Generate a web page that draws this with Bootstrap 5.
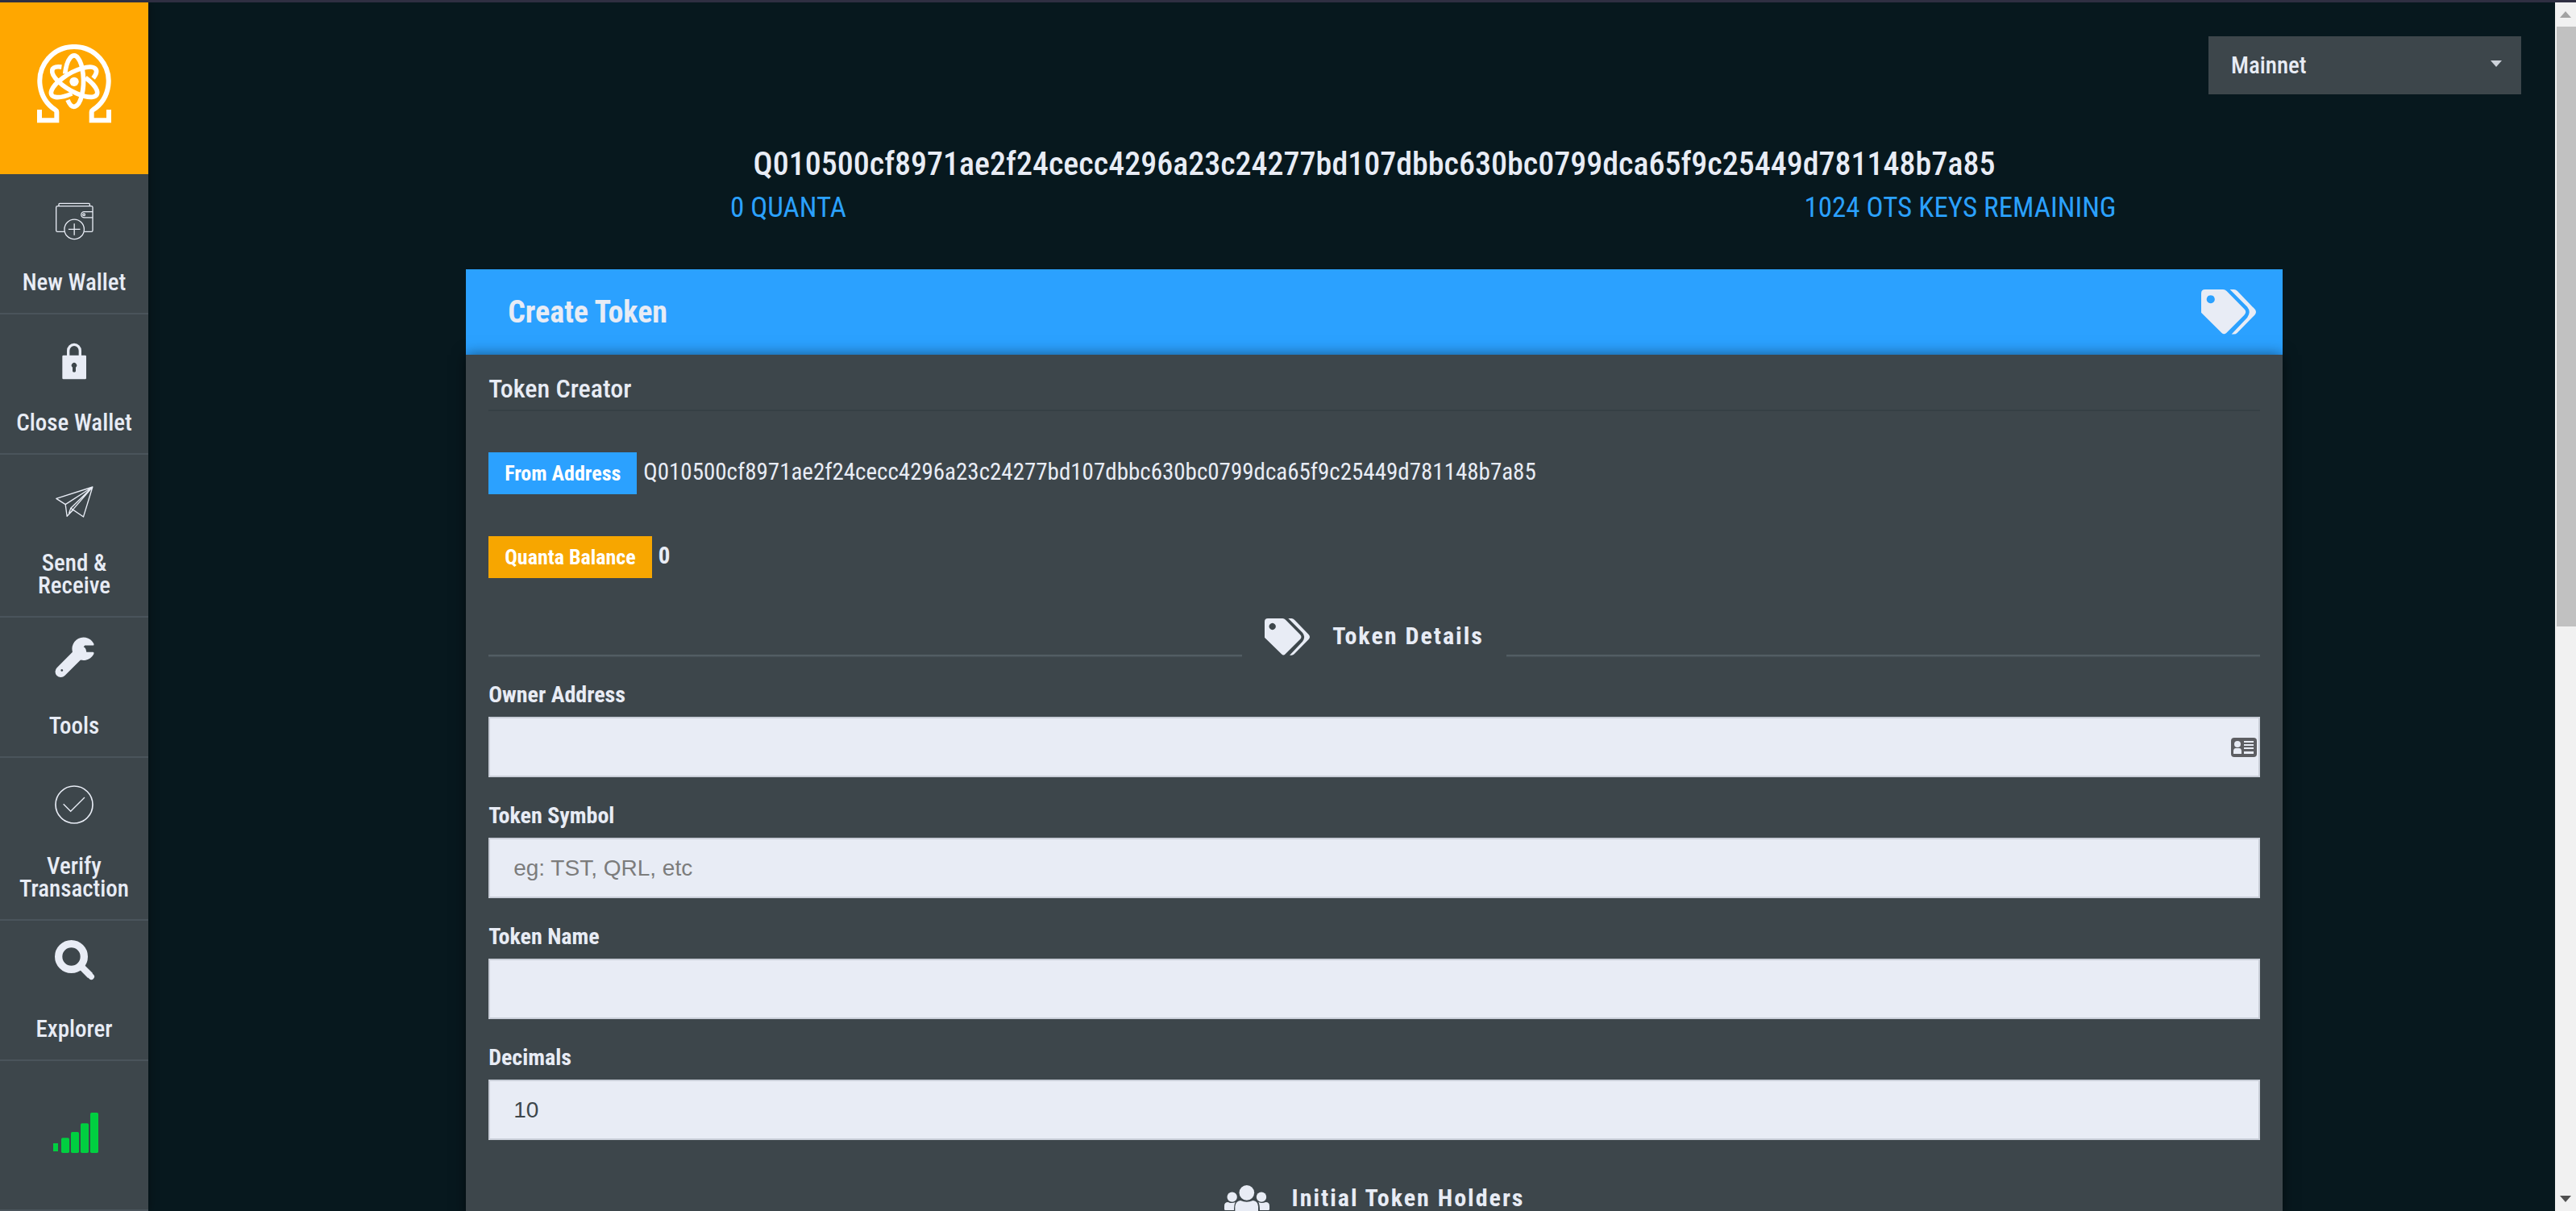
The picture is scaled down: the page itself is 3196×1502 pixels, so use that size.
<!DOCTYPE html>
<html lang="en">
<head>
<meta charset="utf-8">
<meta name="viewport" content="width=device-width, initial-scale=1">
<title>QRL Wallet - Create Token</title>
<link href="https://cdn.jsdelivr.net/npm/bootstrap@5.3.0/dist/css/bootstrap.min.css" rel="stylesheet">
<style>
  :root { --panel: #3d464b; --ink: #e8ecf5; --blue: #2ba1ff; --amber: #ffa700; --night: #07181e; }
  body { font-family: "Roboto Condensed", Roboto, sans-serif; font-size: 28px; line-height: 36px; color: var(--ink); background: var(--night); border-top: 3px solid #2f2f42; }
  .side-nav { width: 184px; background: var(--panel); box-shadow: 0 0 12px rgba(0,0,0,.4); }
  .brand-tile { height: 213px; padding-bottom: 11px; background: var(--amber); }
  .side-item { color: var(--ink); font-size: 29px; font-weight: 500; line-height: 28px; padding: 0 8px 24px; border-bottom: 2px solid #4a545b; text-align: center; text-decoration: none; }
  .side-icon { height: 120px; padding-bottom: 4px; }
  .side-icon.raised { padding-bottom: 22px; }
  .side-status { height: 186px; padding: 0 0 6px 4px; border-bottom: 2px solid #4a545b; }
  .workspace { padding: 42px 11px 0 67px; }
  .network-select { width: 388px; height: 72px; margin-right: 31px; padding: 2px 56px 0 28px; border: 0; border-radius: 0; color: var(--ink); background-color: var(--panel); font-size: 29px; font-weight: 500;
    background-image: url("data:image/svg+xml,%3Csvg xmlns='http://www.w3.org/2000/svg' viewBox='0 0 14 8'%3E%3Cpath fill='%23cdd2da' d='M0 0h14L7 8z'/%3E%3C/svg%3E"); background-size: 14px 8px; background-position: right 24px top 30px; }
  .wallet-address { font-size: 40px; line-height: 56px; font-weight: 500; margin-top: 59px; }
  .wallet-stats { font-size: 35px; line-height: 48px; color: var(--blue); margin-top: 2px; margin-bottom: 52px; }
  .token-panel { width: 77.5%; }
  .token-head { height: 106px; padding: 0 33px 0 52px; background: var(--blue); }
  .token-head h1 { font-size: 38px; line-height: 48px; font-weight: 700; }
  .token-body { padding: 22px 28px 0; background: var(--panel); box-shadow: 0 0 16px rgba(0,0,0,.5); }
  .creator-title { font-size: 32px; line-height: 40px; font-weight: 500; padding-bottom: 6px; margin-bottom: 51px; border-bottom: 2px solid #364045; }
  .detail-row { gap: 8px; margin-bottom: 52px; font-size: 29px; }
  .tag-btn { height: 52px; padding: 0 20px; border: 0; border-radius: 0; font-size: 26px; line-height: 48px; font-weight: 700; color: #fff; }
  .tag-blue { background: var(--blue); }
  .tag-amber { background: #f7a600; }
  .detail-value { line-height: 48px; padding-bottom: 4px; }
  .section-title { gap: 28px; margin-top: 50px; height: 48px; }
  .section-title h2 { font-size: 30px; line-height: 44px; font-weight: 700; letter-spacing: 2px; }
  .rule { height: 3px; background: linear-gradient(#5a656c, #434d53); }
  .field-list { gap: 30px; padding-top: 29px; }
  .field-list label { font-weight: 700; margin-bottom: 9px; }
  .field-list .form-control { height: 75px; padding: 0 29px; border: 2px solid #c9ced8; border-radius: 0; background: var(--ink); color: var(--panel); font: 28px "Liberation Sans", sans-serif; }
  .field-list .form-control::placeholder { color: #7c7c7c; }
  .contact-icon { right: 4px; top: 26px; }
  .scroll-rail { width: 26px; background: #f1f1f1; }
  .scroll-end { height: 30px; }
  .scroll-thumb { height: 49.6%; margin-left: 2px; background: #c1c1c1; }
</style>
<script src="https://cdn.jsdelivr.net/npm/bootstrap@5.3.0/dist/js/bootstrap.bundle.min.js"></script>
</head>
<body class="vh-100 d-flex overflow-hidden">
<svg class="d-none" aria-hidden="true">
  <symbol id="tags" viewBox="267 142 168 138">
    <path fill="#e8ecf5" fill-rule="evenodd" d="M279 142H334Q340 142 345 147L399 202Q408 211 399 220L344 275Q337 282 330 275L267 213V154Q267 142 279 142ZM296 159.500a12.500 12.500 0 1 0 .1 0Z"/>
    <path fill="#e8ecf5" d="M355 142H367Q373 142 378 147L431 202Q439 211 431 220L377 275Q373 279 367 279H360L408 228Q421 211 408 195Z"/>
  </symbol>
</svg>

<nav class="side-nav d-flex flex-column flex-shrink-0" aria-label="Wallet">
  <a href="#" class="brand-tile d-flex align-items-center justify-content-center flex-shrink-0" aria-label="Home">
    <svg width="92" height="98" viewBox="138 165 276 294" fill="none" stroke="#fff" stroke-width="18">
      <path d="M147 408V448H211V416Q211 412 206 409A128 128 0 1 1 346 409Q341 412 341 416V448H405V408"/>
      <g stroke-width="17">
        <path d="M252 372A35 95 0 1 0 242 275"/>
        <path d="M252 372A35 95 0 1 0 242 275" transform="rotate(120 276 304)"/>
        <path d="M252 372A35 95 0 1 0 242 275" transform="rotate(240 276 304)"/>
      </g>
      <circle cx="276" cy="304" r="17" fill="#fff" stroke="none"/>
    </svg>
  </a>
  <a href="#" class="side-item">
    <span class="side-icon d-flex align-items-center justify-content-center">
      <svg width="47" height="47" viewBox="206 752 142 140" fill="none" stroke="#e8ecf5" stroke-width="4">
        <path d="M239 861H213Q208 861 208 856V770Q208 765 213 765H340Q345 765 345 770V856Q345 861 340 861H313M218 765V758Q218 755 221 755H331Q334 755 334 758V765M345 786H313a11 11 0 0 0 0 22H345"/>
        <circle cx="312" cy="797" r="4"/><circle cx="276" cy="852" r="37"/><path d="M254 852H298M276 830V874"/>
      </svg>
    </span>New Wallet
  </a>
  <a href="#" class="side-item">
    <span class="side-icon d-flex align-items-center justify-content-center">
      <svg width="30" height="46" viewBox="231 136 90 138">
        <path d="M254 188V166A22 23 0 0 1 298 166V188" fill="none" stroke="#e8ecf5" stroke-width="10"/>
        <path fill="#e8ecf5" fill-rule="evenodd" d="M236 183H317Q321 183 321 187V268Q321 272 317 272H236Q232 272 232 268V187Q232 183 236 183ZM270 228V242Q270 246 276 246T282 242V228A9.500 9.500 0 1 0 270 228Z"/>
      </svg>
    </span>Close Wallet
  </a>
  <a href="#" class="side-item">
    <span class="side-icon d-flex align-items-center justify-content-center">
      <svg width="47" height="39" viewBox="206 667 140 117" fill="none" stroke="#e8ecf5" stroke-width="4" stroke-linejoin="round">
        <path d="M343 670L208 713L242 735L248 779L271 755M343 670L242 735M343 670L248 779M343 670L262 749L309 781ZM262 749L255 768"/>
      </svg>
    </span>Send &amp;<br>Receive
  </a>
  <a href="#" class="side-item">
    <span class="side-icon raised d-flex align-items-center justify-content-center">
      <svg width="49" height="50" viewBox="203 89 147 151">
        <path d="M225 219L300 144" stroke="#e8ecf5" stroke-width="42" stroke-linecap="round"/>
        <path fill="#e8ecf5" d="M348 113A43 43 0 1 0 348 154Q351 146 345 146H315L306 137V131L315 121H345Q351 121 348 113Z"/>
        <circle cx="229" cy="214" r="4" fill="#3d464b"/>
      </svg>
    </span>Tools
  </a>
  <a href="#" class="side-item">
    <span class="side-icon d-flex align-items-center justify-content-center">
      <svg width="48" height="48" viewBox="204 642 144 144" fill="none" stroke="#e8ecf5" stroke-width="5">
        <circle cx="276" cy="714" r="69"/><path stroke-width="4" d="M236 712L263 739L315 687"/>
      </svg>
    </span>Verify<br>Transaction
  </a>
  <a href="#" class="side-item">
    <span class="side-icon raised d-flex align-items-center justify-content-center">
      <svg width="52" height="50" viewBox="198 138 156 150" fill="none" stroke="#e8ecf5" stroke-width="28">
        <circle cx="265.500" cy="199.500" r="47.500"/><path d="M302 236L336 270" stroke-width="25"/><path d="M329 263L340 274" stroke-width="22" stroke-linecap="round"/>
      </svg>
    </span>Explorer
  </a>
  <div class="side-status d-flex align-items-center justify-content-center flex-shrink-0">
    <svg width="56" height="50" viewBox="198 783 168 150" fill="#00cf40" role="img" aria-label="Connected">
      <rect x="198" y="897" width="18" height="30"/><rect x="228" y="877" width="30" height="56" rx="5"/><rect x="264" y="855" width="30" height="78" rx="5"/><rect x="300" y="823" width="30" height="110" rx="5"/><rect x="336" y="783" width="30" height="150" rx="5"/>
    </svg>
  </div>
</nav>

<main class="workspace flex-grow-1 d-flex flex-column">
  <div class="d-flex justify-content-end">
    <select class="form-select network-select" aria-label="Network"><option>Mainnet</option><option>Testnet</option></select>
  </div>
  <div class="d-flex flex-column align-items-center flex-grow-1">
    <div class="wallet-address">Q010500cf8971ae2f24cecc4296a23c24277bd107dbbc630bc0799dca65f9c25449d781148b7a85</div>
    <div class="wallet-stats row g-0 w-100 text-center">
      <div class="col">0 QUANTA</div>
      <div class="col">1024 OTS KEYS REMAINING</div>
    </div>
    <section class="token-panel d-flex flex-column flex-grow-1">
      <header class="token-head d-flex align-items-center justify-content-between">
        <h1 class="m-0">Create Token</h1>
        <svg width="68" height="56"><use href="#tags"/></svg>
      </header>
      <form class="token-body flex-grow-1">
        <div class="creator-title">Token Creator</div>
        <div class="detail-row d-flex">
          <button type="button" class="btn tag-btn tag-blue">From Address</button>
          <span class="detail-value">Q010500cf8971ae2f24cecc4296a23c24277bd107dbbc630bc0799dca65f9c25449d781148b7a85</span>
        </div>
        <div class="detail-row d-flex mb-0">
          <button type="button" class="btn tag-btn tag-amber">Quanta Balance</button>
          <strong class="detail-value">0</strong>
        </div>
        <div class="section-title d-flex">
          <span class="rule flex-fill align-self-end"></span>
          <svg width="56" height="46"><use href="#tags"/></svg>
          <h2 class="m-0">Token Details</h2>
          <span class="rule flex-fill align-self-end"></span>
        </div>
        <div class="field-list d-flex flex-column">
          <div>
            <label class="d-block" for="owner">Owner Address</label>
            <div class="position-relative">
              <input class="form-control" type="text" id="owner">
              <svg class="contact-icon position-absolute" width="32" height="24" viewBox="0 0 32 24">
                <rect width="32" height="24" rx="4" fill="#5d5e62"/>
                <g fill="#e8ecf5"><circle cx="8" cy="8" r="4"/><path d="M3 20V17Q3 13 6 13H10Q13 13 13 17V20ZM16 4h12v2H16ZM16 8h12v2H16ZM16 12h12v2H16ZM16 17h12v3H16Z"/></g>
              </svg>
            </div>
          </div>
          <div><label class="d-block" for="symbol">Token Symbol</label><input class="form-control" type="text" id="symbol" placeholder="eg: TST, QRL, etc"></div>
          <div><label class="d-block" for="name">Token Name</label><input class="form-control" type="text" id="name"></div>
          <div><label class="d-block" for="decimals">Decimals</label><input class="form-control" type="text" id="decimals" value="10"></div>
        </div>
        <div class="section-title d-flex">
          <span class="rule flex-fill align-self-end"></span>
          <svg width="56" height="46" viewBox="117 129 168 138" fill="#e8ecf5">
            <circle cx="200.500" cy="175" r="28"/><circle cx="146" cy="191" r="18.500"/><circle cx="255" cy="191" r="18.500"/>
            <path d="M117 236V224Q117 210 131 210Q146 216 158 210Q153 219 153 240H121Q117 240 117 236ZM285 236V224Q285 210 271 210Q256 216 244 210Q249 219 249 240H281Q285 240 285 236Z"/>
            <path d="M157 250V226Q159 206 177 204Q200 215 224 204Q242 206 243 226V250Q243 258 235 258H165Q157 258 157 250Z"/>
          </svg>
          <h2 class="m-0">Initial Token Holders</h2>
          <span class="rule flex-fill align-self-end"></span>
        </div>
      </form>
    </section>
  </div>
</main>

<div class="scroll-rail d-flex flex-column flex-shrink-0" aria-hidden="true">
  <div class="scroll-end d-flex align-items-center justify-content-center"><svg width="14" height="8" viewBox="0 0 14 8"><path fill="#a3a3a3" d="M0 8L7 0L14 8Z"/></svg></div>
  <div class="scroll-thumb"></div>
  <div class="scroll-end d-flex align-items-center justify-content-center mt-auto"><svg width="14" height="8" viewBox="0 0 14 8"><path fill="#505050" d="M0 0H14L7 8Z"/></svg></div>
</div>
</body>
</html>
